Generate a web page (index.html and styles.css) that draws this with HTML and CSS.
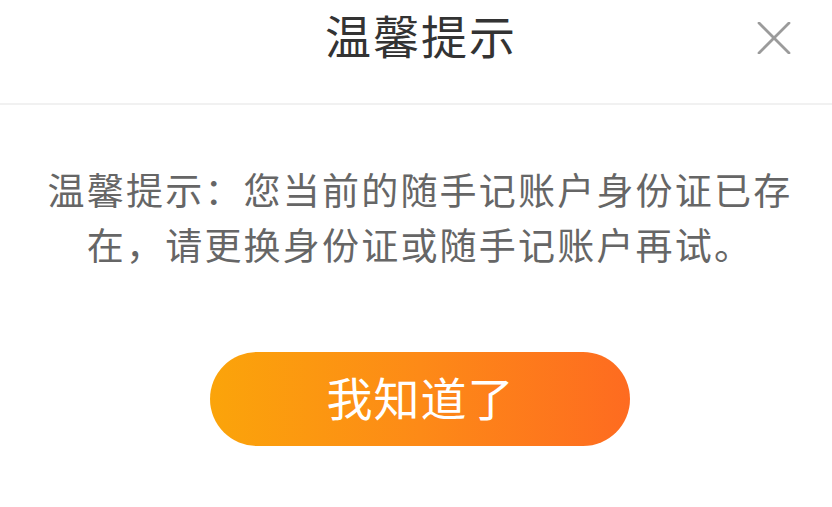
FILE: index.html
```html
<!DOCTYPE html>
<html lang="zh-CN">
<head>
<meta charset="utf-8">
<title>温馨提示</title>
<link rel="stylesheet" href="styles.css">
</head>
<body>
<div class="dialog">
  <header class="header">
    <span class="spacer"></span>
    <h1 class="title">温馨提示</h1>
    <span class="close" aria-label="关闭">
      <svg width="34" height="32" viewBox="0 0 34 32">
        <path d="M2 1 L32 31 M32 1 L2 31" stroke="#9b9b9b" stroke-width="2.8" fill="none" stroke-linecap="round"/>
      </svg>
    </span>
  </header>
  <div class="content">
    <p class="message">温馨提示：您当前的随手记账户身份证已存<br>在，请更换身份证或随手记账户再试。</p>
    <button class="btn">我知道了</button>
  </div>
</div>
</body>
</html>
```
FILE: styles.css
```css
html, body {
  margin: 0;
  padding: 0;
  background: #ffffff;
}
body {
  width: 832px;
  height: 507px;
  overflow: hidden;
  font-family: "Noto Sans CJK SC", "Noto Sans", sans-serif;
}
.dialog {
  padding-left: 8px;
}
.header {
  display: grid;
  grid-template-columns: 1fr auto 1fr;
  align-items: start;
  height: 92px;
  padding-top: 11px;
  border-bottom: 2px solid #f1f1f1;
  margin-left: -8px;
  padding-left: 8px;
}
.title {
  margin: 0;
  font-size: 46px;
  line-height: 46px;
  font-weight: 400;
  letter-spacing: 2px;
  color: #333333;
  padding-left: 2px;
}
.close {
  justify-self: end;
  margin-right: 41px;
  margin-top: 11px;
  display: flex;
}
.content {
  display: flex;
  flex-direction: column;
  align-items: center;
}
.message {
  margin: 57px 0 0 0;
  font-size: 37px;
  line-height: 55px;
  letter-spacing: 2.2px;
  color: #666666;
  text-align: center;
}
.btn {
  margin-top: 80px;
  width: 420px;
  height: 94px;
  border: none;
  border-radius: 47px;
  background: linear-gradient(90deg, #fba40a 0%, #fd8a17 50%, #fe6b20 100%);
  color: #ffffff;
  font-family: "Noto Sans CJK SC", "Noto Sans", sans-serif;
  font-size: 46px;
  letter-spacing: 1px;
  padding: 0 0 6px 1px;
  line-height: 1;
}
```
